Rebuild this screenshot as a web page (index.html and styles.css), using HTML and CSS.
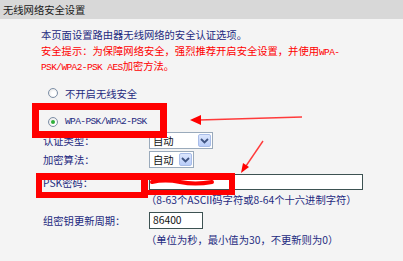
FILE: index.html
```html
<!DOCTYPE html>
<html lang="zh-CN">
<head>
    <meta charset="UTF-8">
    <title>无线网络安全设置</title>
    <link rel="stylesheet" href="styles.css">
</head>
<body>

<div class="header">无线网络安全设置</div>

<div class="content">
    <p class="intro">本页面设置路由器无线网络的安全认证选项。</p>
    <p class="warn">安全提示：为保障网络安全，强烈推荐开启安全设置，并使用<span class="mono">WPA-</span><br><span class="mono">PSK/WPA2-PSK AES</span>加密方法。</p>

    <div class="options">
        <div class="radio-row">
            <span class="radio"></span>
            <span>不开启无线安全</span>
        </div>
        <div class="radio-row">
            <span class="radio checked"></span>
            <span class="mono">WPA-PSK/WPA2-PSK</span>
        </div>
    </div>

    <div class="form">
        <div class="field row-1">
            <label>认证类型：</label>
            <div class="select wide">
                <span>自动</span>
                <span class="drop"><svg width="9" height="6" viewBox="0 0 9 6"><path d="M1 1 L4.5 4.5 L8 1" fill="none" stroke="#3f5482" stroke-width="1.8"/></svg></span>
            </div>
        </div>
        <div class="field row-2">
            <label>加密算法：</label>
            <div class="select">
                <span>自动</span>
                <span class="drop"><svg width="9" height="6" viewBox="0 0 9 6"><path d="M1 1 L4.5 4.5 L8 1" fill="none" stroke="#3f5482" stroke-width="1.8"/></svg></span>
            </div>
        </div>
        <div class="field row-psk">
            <label>PSK密码：</label>
            <div class="input long"></div>
        </div>
        <p class="hint hint-1">（8-63个ASCII码字符或8-64个十六进制字符）</p>
        <div class="field row-period">
            <label>组密钥更新周期：</label>
            <div class="input short">86400</div>
        </div>
        <p class="hint hint-2">（单位为秒，最小值为30，不更新则为0）</p>
    </div>
</div>

<!-- annotations drawn over the page -->
<div class="mark mark-radio"></div>
<div class="mark mark-label"></div>
<div class="mark mark-input"></div>
<svg class="arrows" width="403" height="261" viewBox="0 0 403 261">
    <path d="M152 182 Q 165 179 180 182 T 212 182" fill="none" stroke="#f00" stroke-width="4" stroke-linecap="round"/>
    <path d="M302 117 L 199 120" stroke="#ff3a3a" stroke-width="1.4" fill="none"/>
    <polygon points="190,120 201,115 201,125" fill="#f00"/>
    <path d="M263 141 L 246 166" stroke="#ff3a3a" stroke-width="1.4" fill="none"/>
    <polygon points="241,173 249,167 243,163" fill="#f00"/>
</svg>

</body>
</html>
```

FILE: styles.css
```css
* {
    box-sizing: border-box;
    margin: 0;
    padding: 0;
}
body {
    position: relative;
    width: 403px;
    height: 261px;
    overflow: hidden;
    background: #f4f4f4;
    font-family: "Noto Sans CJK SC", sans-serif;
    font-size: 10.3px;
    color: #1e2a80;
}
.header {
    height: 19px;
    line-height: 19px;
    padding-left: 3px;
    background: #d8d8d8;
    color: #1a1a1a;
}
.content {
    padding: 7.5px 0 0 41px;
}
.intro {
    height: 15px;
    line-height: 15px;
}
.warn {
    height: 30px;
    margin-top: 1px;
    line-height: 15px;
    color: #f00;
}
.mono {
    font-family: "Liberation Mono", monospace;
    font-size: 9.5px;
    line-height: 10px;
    letter-spacing: -0.6px;
}
/* radio buttons */
.options {
    margin-top: 11.5px;
    padding-left: 7px;
}
.radio-row {
    display: flex;
    align-items: center;
    gap: 7px;
    height: 18px;
}
.radio-row + .radio-row {
    margin-top: 11px;
}
.radio {
    width: 10px;
    height: 10px;
    border: 1px solid #7d8fa6;
    border-radius: 50%;
    background: radial-gradient(circle at 60% 60%, #fff 30%, #dcdcdc 100%);
    display: flex;
    align-items: center;
    justify-content: center;
}
.radio.checked::after {
    content: "";
    width: 4px;
    height: 4px;
    border-radius: 50%;
    background: #2fae3a;
}
/* form rows */
.form {
    margin-top: 1px;
    padding-left: 2px;
}
.field {
    display: flex;
    align-items: center;
}
.field label {
    width: 106px;
}
.row-1 { height: 17px; }
.row-2 { height: 17px; margin-top: 2px; }
.row-psk { height: 16px; margin-top: 6px; }
.row-period { height: 17px; margin-top: 5px; }
.select {
    display: flex;
    align-items: center;
    justify-content: space-between;
    width: 45px;
    height: 17px;
    padding: 1px 1px 1px 3px;
    background: #fff;
    border: 1px solid #9aaabb;
    color: #111;
}
.select.wide {
    width: 64px;
}
.drop {
    display: flex;
    align-items: center;
    justify-content: center;
    width: 13px;
    height: 13px;
    background: linear-gradient(#dce6fd, #b9cdf9);
    border: 1px solid #a9bde8;
    border-radius: 2px;
}
.input {
    height: 16px;
    background: #fff;
    border: 1px solid #3d5252;
    color: #111;
    padding-left: 3px;
    line-height: 14px;
}
.input.long {
    width: 214px;
}
.input.short {
    width: 54px;
    height: 17px;
}
.hint {
    height: 14px;
    line-height: 14px;
    margin-left: 103px;
}
.hint-1 { margin-top: 3px; }
.hint-2 { margin-top: 4px; }
/* red annotation boxes */
.mark {
    position: absolute;
    border: 7px solid #f00;
}
.mark-radio {
    left: 32px;
    top: 103px;
    width: 135px;
    height: 35px;
}
.mark-label {
    left: 36px;
    top: 173px;
    width: 112px;
    height: 25px;
    border-width: 7px 7px 6px 6px;
}
.mark-input {
    left: 141px;
    top: 173px;
    width: 94px;
    height: 22px;
    border-width: 7px 6px 5px 6px;
}
.arrows {
    position: absolute;
    left: 0;
    top: 0;
    pointer-events: none;
}
```
